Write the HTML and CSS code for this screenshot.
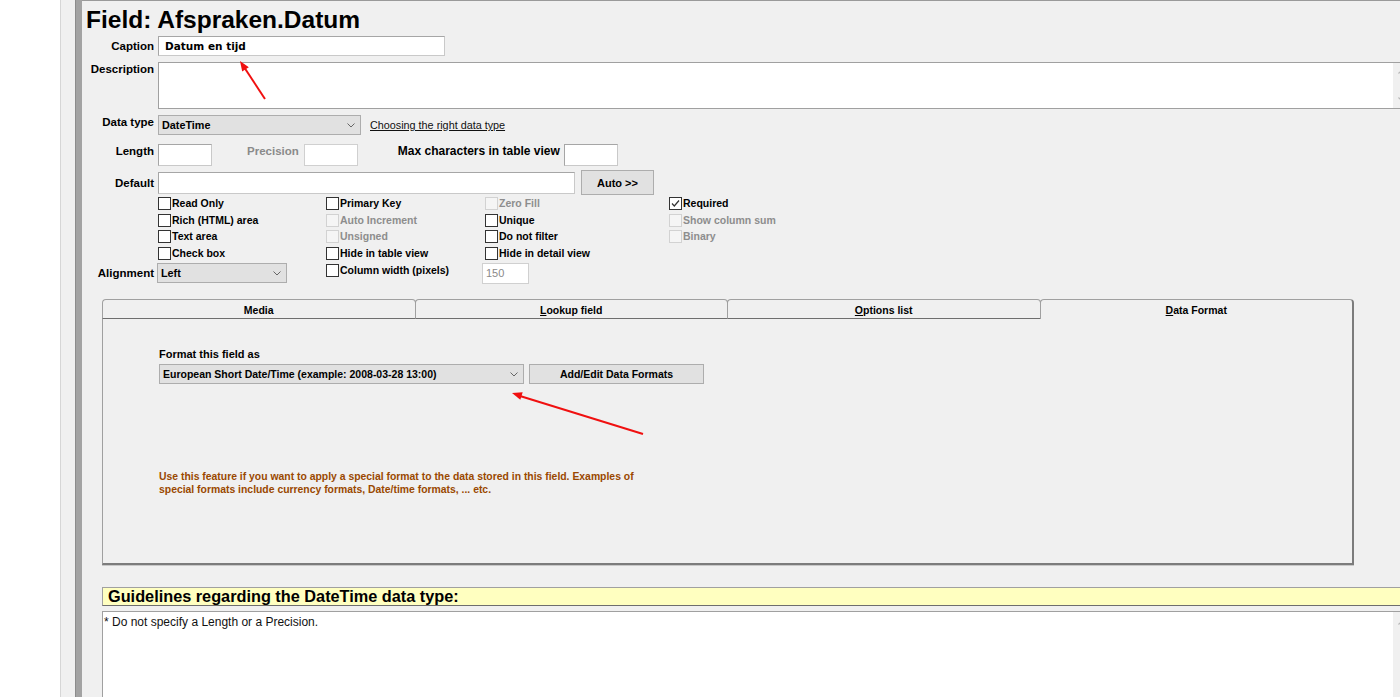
FILE: index.html
```html
<!DOCTYPE html>
<html>
<head>
<meta charset="utf-8">
<title>Field</title>
<link rel="stylesheet" href="styles.css">
</head>
<body>
<div class="side"></div>
<div class="split"><div class="split-gap"></div><div class="split-bar"></div></div>
<div class="main">
  <div class="title">Field: Afspraken.Datum</div>

  <div class="row r-caption">
    <div class="lbl">Caption</div>
    <div class="inp caption-inp">Datum en tijd</div>
  </div>

  <div class="row r-desc">
    <div class="lbl lbl-top">Description</div>
    <div class="ta desc-ta">
      <div class="ta-body"></div>
      <div class="vscroll">
        <svg class="chev" width="8" height="5" viewBox="0 0 8 5"><path d="M0.5 4.5 L4 1 L7.5 4.5" fill="none" stroke="#b5b5b5" stroke-width="1.2"/></svg>
        <svg class="chev" width="8" height="5" viewBox="0 0 8 5"><path d="M0.5 0.5 L4 4 L7.5 0.5" fill="none" stroke="#b5b5b5" stroke-width="1.2"/></svg>
      </div>
    </div>
  </div>

  <div class="row r-type">
    <div class="lbl lbl-up">Data type</div>
    <div class="sel type-sel"><span>DateTime</span><svg width="8" height="5" viewBox="0 0 8 5"><path d="M0.5 0.5 L4 4 L7.5 0.5" fill="none" stroke="#666" stroke-width="1"/></svg></div>
    <span class="link">Choosing the right data type</span>
  </div>

  <div class="row r-len">
    <div class="lbl lbl-up2">Length</div>
    <div class="inp small-inp"></div>
    <div class="lbl2 dis-text prec-lbl">Precision</div>
    <div class="inp small-inp dis-inp"></div>
    <div class="lbl2 max-lbl">Max characters in table view</div>
    <div class="inp small-inp"></div>
  </div>

  <div class="row r-def">
    <div class="lbl">Default</div>
    <div class="inp def-inp"></div>
    <div class="btn auto-btn">Auto &gt;&gt;</div>
  </div>

  <div class="cbgrid">
    <div class="cell-empty"></div>
    <div class="cb"><span class="box"></span>Read Only</div>
    <div class="cb"><span class="box"></span>Primary Key</div>
    <div class="cb dis"><span class="box"></span>Zero Fill</div>
    <div class="cb"><span class="box"><svg width="11" height="11" viewBox="0 0 11 11"><path d="M2 5.5 L4.3 8 L9 2.5" fill="none" stroke="#333" stroke-width="1.2"/></svg></span>Required</div>

    <div class="cell-empty"></div>
    <div class="cb"><span class="box"></span>Rich (HTML) area</div>
    <div class="cb dis"><span class="box"></span>Auto Increment</div>
    <div class="cb"><span class="box"></span>Unique</div>
    <div class="cb dis"><span class="box"></span>Show column sum</div>

    <div class="cell-empty"></div>
    <div class="cb"><span class="box"></span>Text area</div>
    <div class="cb dis"><span class="box"></span>Unsigned</div>
    <div class="cb"><span class="box"></span>Do not filter</div>
    <div class="cb dis"><span class="box"></span>Binary</div>

    <div class="cell-empty"></div>
    <div class="cb"><span class="box"></span>Check box</div>
    <div class="cb"><span class="box"></span>Hide in table view</div>
    <div class="cb"><span class="box"></span>Hide in detail view</div>
    <div class="cell-empty"></div>

    <div class="lbl align-lbl">Alignment</div>
    <div class="align-cell"><div class="sel align-sel"><span>Left</span><svg width="8" height="5" viewBox="0 0 8 5"><path d="M0.5 0.5 L4 4 L7.5 0.5" fill="none" stroke="#666" stroke-width="1"/></svg></div></div>
    <div class="cb cb-last"><span class="box"></span>Column width (pixels)</div>
    <div class="w-cell"><div class="inp dis-inp w-inp">150</div></div>
    <div class="cell-empty"></div>
  </div>

  <div class="tabs-wrap">
    <div class="tabstrip">
      <div class="tab">Media</div>
      <div class="tab"><span><u>L</u>ookup field</span></div>
      <div class="tab"><span><u>O</u>ptions list</span></div>
      <div class="tab sel-tab"><span><u>D</u>ata Format</span></div>
    </div>
    <div class="panel">
      <div class="fmt-label">Format this field as</div>
      <div class="fmt-row">
        <div class="sel fmt-sel"><span>European Short Date/Time (example: 2008-03-28 13:00)</span><svg width="8" height="5" viewBox="0 0 8 5"><path d="M0.5 0.5 L4 4 L7.5 0.5" fill="none" stroke="#666" stroke-width="1"/></svg></div>
        <div class="btn fmt-btn">Add/Edit Data Formats</div>
      </div>
      <div class="note">Use this feature if you want to apply a special format to the data stored in this field. Examples of<br>special formats include currency formats, Date/time formats, ... etc.</div>
    </div>
  </div>

  <div class="guide">Guidelines regarding the DateTime data type:</div>
  <div class="ta guide-ta">
    <div class="ta-body guide-text">* Do not specify a Length or a Precision.</div>
    <div class="vscroll">
      <svg class="chev" width="8" height="5" viewBox="0 0 8 5"><path d="M0.5 4.5 L4 1 L7.5 4.5" fill="none" stroke="#b5b5b5" stroke-width="1.2"/></svg>
    </div>
  </div>
</div>

<svg class="arrows" width="1400" height="697" viewBox="0 0 1400 697">
  <line x1="265" y1="99" x2="244" y2="67" stroke="#f01010" stroke-width="2"/>
  <polygon points="240,61 248.8,67.2 242.2,71.6" fill="#f01010"/>
  <line x1="643" y1="434" x2="520" y2="396" stroke="#f01010" stroke-width="2"/>
  <polygon points="512,393 522.7,392.2 520.3,399.8" fill="#f01010"/>
</svg>
</body>
</html>
```
FILE: styles.css
```css
* { box-sizing: border-box; }
html, body { margin: 0; padding: 0; }
body {
  width: 1400px;
  height: 697px;
  overflow: hidden;
  display: flex;
  position: relative;
  background: #fff;
  font-family: "Liberation Sans", Arial, sans-serif;
  color: #000;
}
.side { width: 60px; flex: none; background: #fff; }
.split {
  width: 22px; flex: none; display: flex;
  border-left: 1px solid #d6d6d6; background: #f0f0f0;
}
.split-gap { width: 14px; }
.split-bar { width: 7px; background: #a3a3a3; border-left: 1px solid #8c8c8c; }
.main {
  flex: 1; min-width: 0;
  background: #f0f0f0;
  border-top: 1px solid #9a9a9a;
  overflow: hidden;
}
.title {
  font-size: 24.5px; font-weight: bold; line-height: 27px;
  margin: 5px 0 0 4px; white-space: nowrap;
}
.row { display: flex; align-items: center; }
.lbl {
  width: 76px; flex: none; padding-right: 4px; text-align: right;
  font-size: 11.5px; font-weight: bold; white-space: nowrap;
}
.lbl2 { font-size: 12px; font-weight: bold; white-space: nowrap; }
.dis-text { color: #8a8a8a; }
.lbl-top { padding-top: 1px; align-self: flex-start; }
.lbl-up { align-self: flex-start; line-height: 14px; }
.lbl-up2 { align-self: flex-start; line-height: 14px; padding-top: 0; }
.inp {
  background: #fff; border: 1px solid #a6a6a6; border-right-color: #c9c9c9; border-bottom-color: #c9c9c9;
}
.dis-inp { border-color: #d0d0d0; background: #fff; }
.r-caption { margin-top: 3px; }
.caption-inp {
  width: 287px; height: 20px; padding-left: 6px;
  font-family: "DejaVu Sans", Verdana, sans-serif; font-size: 10.5px; font-weight: bold;
  line-height: 18px;
}
.r-desc { margin-top: 6px; align-items: flex-start; }
.ta {
  display: flex; background: #fff;
  border-top: 1px solid #a0a0a0; border-left: 1px solid #a0a0a0; border-bottom: 1px solid #a0a0a0;
}
.desc-ta { flex: 1; height: 47px; margin-right: -10px; }
.ta-body { flex: 1; }
.vscroll {
  width: 17px; flex: none; background: #f0f0f0;
  display: flex; flex-direction: column; justify-content: space-between; align-items: center;
  padding: 6px 0;
}
.chev { display: block; }
.r-type { margin-top: 6px; }
.sel {
  display: flex; align-items: center; justify-content: space-between;
  background: #e1e1e1; border: 1px solid #adadad;
  font-size: 10.8px; font-weight: bold; padding: 0 5px 0 3px; white-space: nowrap;
}
.type-sel { width: 203px; height: 20px; }
.link { margin-left: 9px; font-size: 10.8px; text-decoration: underline; color: #111; }
.r-len { margin-top: 9px; align-items: flex-start; }
.r-len .lbl2 { line-height: 14px; }
.small-inp { width: 54px; height: 22px; }
.prec-lbl { margin-left: 35px; margin-right: 5px; font-size: 11.5px; }
.max-lbl { margin-left: 40px; margin-right: 4px; }
.r-def { margin-top: 4px; }
.def-inp { width: 417px; height: 22px; }
.btn {
  background: #e1e1e1; border: 1px solid #adadad;
  display: flex; align-items: center; justify-content: center;
  font-size: 11px; font-weight: bold; white-space: nowrap;
}
.auto-btn { width: 73px; height: 25px; margin-left: 6px; }
.cbgrid {
  display: grid;
  grid-template-columns: 76px 168px 159px 184px 1fr;
  grid-template-rows: 17px 16px 17px 17px 21px;
}
.cb {
  display: flex; align-items: center;
  font-size: 10.5px; font-weight: bold; white-space: nowrap; height: 16px;
}
.box {
  width: 13px; height: 13px; flex: none; margin-right: 1px;
  border: 1px solid #333; background: #fff;
  display: flex; align-items: center; justify-content: center;
}
.cb.dis { color: #8d8d8d; }
.cb.dis .box { border-color: #d2d2d2; background: #f5f5f5; }
.align-lbl { align-self: center; padding-top: 0; }
.align-cell { padding-top: 1px; }
.align-sel { width: 130px; height: 20px; margin-left: -1px; }
.cb-last { margin-top: 0; }
.w-cell { padding-top: 1px; }
.w-inp {
  width: 47px; height: 21px; margin-left: -3px;
  font-size: 11px; color: #8a8a8a; padding-left: 3px; line-height: 19px;
}
.tabs-wrap { margin: 16px 0 0 20px; width: 1252px; }
.tabstrip { display: flex; height: 20px; }
.tab {
  flex: 1; display: flex; align-items: center; justify-content: center;
  border: 1px solid #a0a0a0; border-bottom-color: #6e6e6e; border-right-color: #8a8a8a;
  border-radius: 4px 4px 0 0; margin-right: -1px; padding-top: 1px;
  font-size: 10.5px; font-weight: bold; white-space: nowrap;
}
.sel-tab { border-bottom: none; border-right: 2px solid #7c7c7c; margin-right: 0; }
.panel {
  height: 246px;
  border-left: 1px solid #a0a0a0; border-right: 2px solid #7c7c7c; border-bottom: 2px solid #7c7c7c;
  box-shadow: 0 1px 0 #c8c8c8;
  padding: 28px 0 0 56px;
}
.fmt-label { font-size: 11px; font-weight: bold; line-height: 14px; }
.fmt-row { display: flex; margin-top: 3px; }
.fmt-sel { width: 365px; height: 20px; font-size: 10.5px; padding-left: 3px; }
.fmt-btn { width: 175px; height: 20px; margin-left: 5px; font-size: 10.5px; }
.note {
  margin-top: 86px; color: #9a4800;
  font-size: 10.4px; font-weight: bold; line-height: 13px; white-space: nowrap;
}
.guide {
  margin: 22px 0 0 20px; height: 19px;
  background: #ffffc0;
  border-top: 1px solid #a0a0a0; border-bottom: 1px solid #6e6e6e; border-left: 1px solid #a0a0a0;
  font-size: 16.3px; font-weight: bold; line-height: 17px; padding-left: 5px; white-space: nowrap;
}
.guide-ta { margin: 5px -10px 0 20px; height: 100px; border-bottom: none; }
.guide-text { font-size: 12px; line-height: 14px; padding: 3px 0 0 1px; color: #111; }
.guide-ta .vscroll { justify-content: flex-start; padding-top: 8px; }
.arrows { position: absolute; left: 0; top: 0; pointer-events: none; }
```
